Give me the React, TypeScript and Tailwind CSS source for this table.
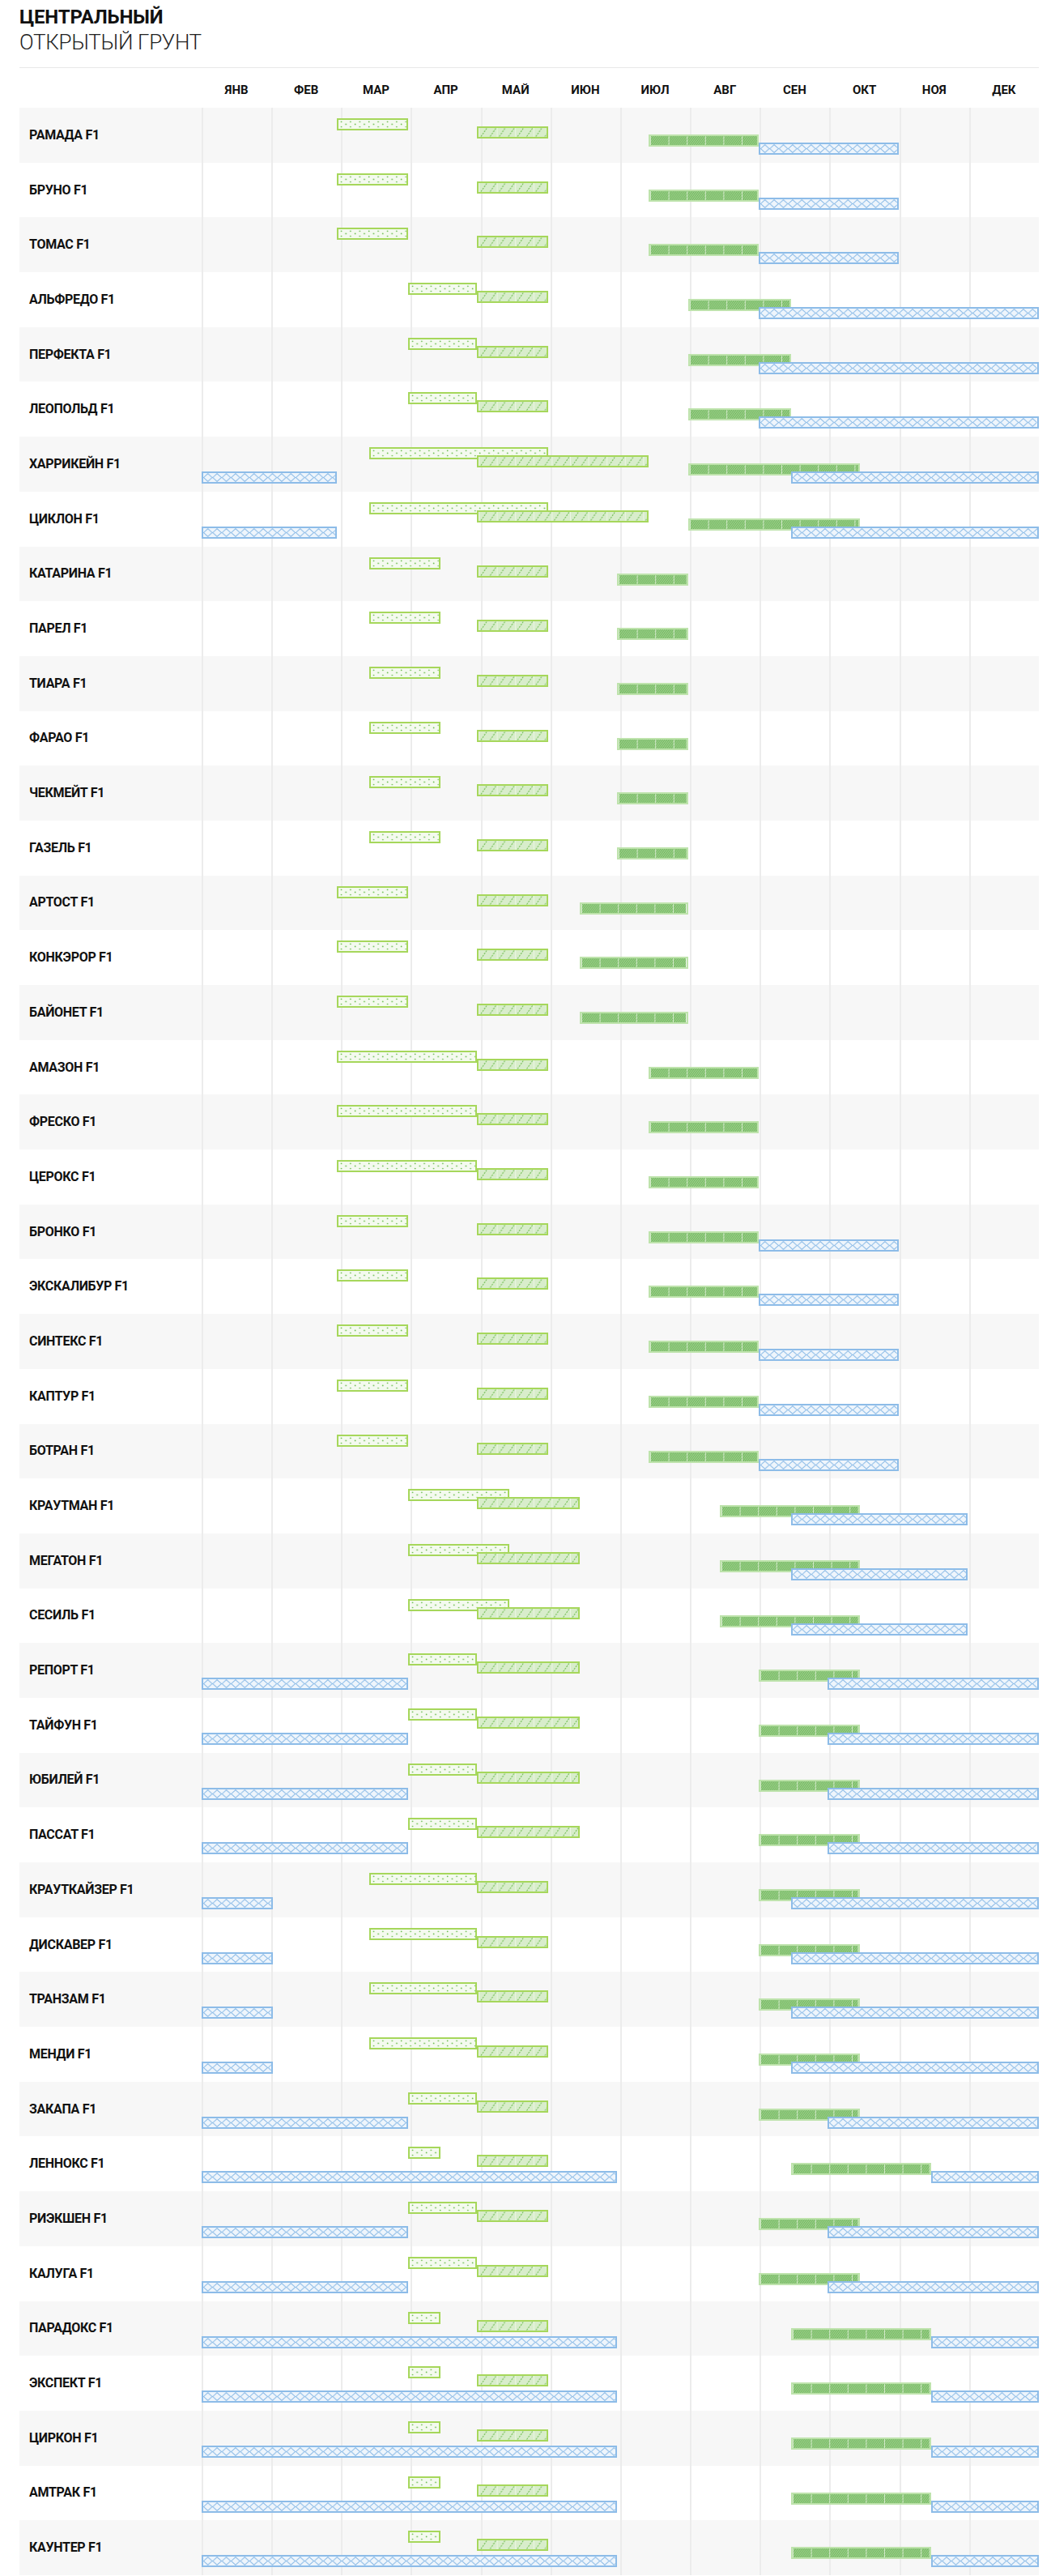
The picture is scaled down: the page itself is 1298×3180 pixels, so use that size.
import React from 'react';

type BarType = 'dot' | 'hat' | 'dark' | 'blue';
type Span = [BarType, number, number];

const MONTHS = ['ЯНВ', 'ФЕВ', 'МАР', 'АПР', 'МАЙ', 'ИЮН', 'ИЮЛ', 'АВГ', 'СЕН', 'ОКТ', 'НОЯ', 'ДЕК'];
const MONTH_START = [0, 31, 59, 90, 120, 151, 181, 212, 243, 273, 304, 334, 365];

// 3 = 1 марта, 3.5 = 15 марта, 13 = конец года
const toDay = (x: number) => {
  const m = Math.floor(x);
  return MONTH_START[m - 1] + (x - m > 0 ? 14 : 0);
};

const A: Span[] = [['dot', 3, 4], ['hat', 5, 6], ['dark', 7.5, 9], ['blue', 9, 11]];
const B: Span[] = [['dot', 4, 5], ['hat', 5, 6], ['dark', 8, 9.5], ['blue', 9, 13]];
const C: Span[] = [['dot', 3.5, 6], ['hat', 5, 7.5], ['dark', 8, 10.5], ['blue', 9.5, 13], ['blue', 1, 3]];
const D: Span[] = [['dot', 3.5, 4.5], ['hat', 5, 6], ['dark', 7, 8]];
const E: Span[] = [['dot', 3, 4], ['hat', 5, 6], ['dark', 6.5, 8]];
const F: Span[] = [['dot', 3, 5], ['hat', 5, 6], ['dark', 7.5, 9]];
const H: Span[] = [['dot', 4, 5.5], ['hat', 5, 6.5], ['dark', 8.5, 10.5], ['blue', 9.5, 12]];
const I: Span[] = [['dot', 4, 5], ['hat', 5, 6.5], ['dark', 9, 10.5], ['blue', 10, 13], ['blue', 1, 4]];
const J: Span[] = [['dot', 3.5, 5], ['hat', 5, 6], ['dark', 9, 10.5], ['blue', 9.5, 13], ['blue', 1, 2]];
const K: Span[] = [['dot', 4, 5], ['hat', 5, 6], ['dark', 9, 10.5], ['blue', 10, 13], ['blue', 1, 4]];
const L: Span[] = [['dot', 4, 4.5], ['hat', 5, 6], ['dark', 9.5, 11.5], ['blue', 11.5, 13], ['blue', 1, 7]];

const rows: { name: string; bars: Span[] }[] = [
  { name: 'РАМАДА F1', bars: A },
  { name: 'БРУНО F1', bars: A },
  { name: 'ТОМАС F1', bars: A },
  { name: 'АЛЬФРЕДО F1', bars: B },
  { name: 'ПЕРФЕКТА F1', bars: B },
  { name: 'ЛЕОПОЛЬД F1', bars: B },
  { name: 'ХАРРИКЕЙН F1', bars: C },
  { name: 'ЦИКЛОН F1', bars: C },
  { name: 'КАТАРИНА F1', bars: D },
  { name: 'ПАРЕЛ F1', bars: D },
  { name: 'ТИАРА F1', bars: D },
  { name: 'ФАРАО F1', bars: D },
  { name: 'ЧЕКМЕЙТ F1', bars: D },
  { name: 'ГАЗЕЛЬ F1', bars: D },
  { name: 'АРТОСТ F1', bars: E },
  { name: 'КОНКЭРОР F1', bars: E },
  { name: 'БАЙОНЕТ F1', bars: E },
  { name: 'АМАЗОН F1', bars: F },
  { name: 'ФРЕСКО F1', bars: F },
  { name: 'ЦЕРОКС F1', bars: F },
  { name: 'БРОНКО F1', bars: A },
  { name: 'ЭКСКАЛИБУР F1', bars: A },
  { name: 'СИНТЕКС F1', bars: A },
  { name: 'КАПТУР F1', bars: A },
  { name: 'БОТРАН F1', bars: A },
  { name: 'КРАУТМАН F1', bars: H },
  { name: 'МЕГАТОН F1', bars: H },
  { name: 'СЕСИЛЬ F1', bars: H },
  { name: 'РЕПОРТ F1', bars: I },
  { name: 'ТАЙФУН F1', bars: I },
  { name: 'ЮБИЛЕЙ F1', bars: I },
  { name: 'ПАССАТ F1', bars: I },
  { name: 'КРАУТКАЙЗЕР F1', bars: J },
  { name: 'ДИСКАВЕР F1', bars: J },
  { name: 'ТРАНЗАМ F1', bars: J },
  { name: 'МЕНДИ F1', bars: J },
  { name: 'ЗАКАПА F1', bars: K },
  { name: 'ЛЕННОКС F1', bars: L },
  { name: 'РИЭКШЕН F1', bars: K },
  { name: 'КАЛУГА F1', bars: K },
  { name: 'ПАРАДОКС F1', bars: L },
  { name: 'ЭКСПЕКТ F1', bars: L },
  { name: 'ЦИРКОН F1', bars: L },
  { name: 'АМТРАК F1', bars: L },
  { name: 'КАУНТЕР F1', bars: L },
];

const barClass: Record<BarType, string> = {
  dot: 'top-[13px] border-[#a6d75b]',
  hat: 'top-[23px] border-[#a6d75b]',
  dark: 'top-[33px] border-[#bee3ac]',
  blue: 'top-[43px] border-[#8dbce8]',
};

const Patterns = () => {
  const darkLines = [];
  for (let x = -9; x < 24; x += 2.6) darkLines.push(x);
  return (
    <svg width="0" height="0" className="block">
      <defs>
        <pattern id="p-dot" width="11.4" height="11" patternUnits="userSpaceOnUse">
          <rect width="11.4" height="11" fill="#f4faef" />
          <circle cx="3.5" cy="2.3" r="0.85" fill="#69bd4c" />
          <circle cx="9.2" cy="5.4" r="0.85" fill="#69bd4c" />
          <circle cx="3.5" cy="8.5" r="0.85" fill="#69bd4c" />
        </pattern>
        <pattern id="p-hat" width="22.6" height="11" patternUnits="userSpaceOnUse">
          <rect width="22.6" height="11" fill="#d8edcb" />
          <rect width="0.8" height="11" fill="#f1f9ec" />
          <line x1="3" y1="10.5" x2="10" y2="0.5" stroke="#6dbd4f" strokeWidth="1" strokeDasharray="2.2 1.2" />
          <line x1="14.3" y1="10.5" x2="21.3" y2="0.5" stroke="#6dbd4f" strokeWidth="1" strokeDasharray="2.2 1.2" />
        </pattern>
        <pattern id="p-dark" width="22.6" height="11" patternUnits="userSpaceOnUse">
          <rect width="22.6" height="11" fill="#9ad187" />
          {darkLines.map((x) => (
            <line key={x} x1={x} y1="11" x2={x + 8} y2="0" stroke="#64a853" strokeWidth="0.8" />
          ))}
          <rect width="0.8" height="11" fill="#e3f2dc" />
        </pattern>
        <pattern id="p-blue" width="11.4" height="11" patternUnits="userSpaceOnUse">
          <rect width="11.4" height="11" fill="#eef5fc" />
          <polygon points="0.5,5.5 5.7,0.6 10.9,5.5 5.7,10.4" fill="none" stroke="#86b8e6" strokeWidth="1" />
        </pattern>
      </defs>
    </svg>
  );
};

const Bar = ({ type, from, to }: { type: BarType; from: number; to: number }) => {
  const start = toDay(from);
  const end = toDay(to);
  return (
    <div
      className={`absolute h-[15px] border-2 ${barClass[type]}`}
      style={{ left: `${(start / 365) * 100}%`, width: `${((end - start) / 365) * 100}%` }}
    >
      <svg className="block h-full w-full">
        <rect width="100%" height="100%" fill={`url(#p-${type})`} />
      </svg>
    </div>
  );
};

export default function App() {
  return (
    <div className="bg-white pl-6 pr-[15px] font-['Roboto','Liberation_Sans',sans-serif] text-[#111]">
      <Patterns />
      <div className="border-b border-[#e8e8e8] pt-[7px] pb-[16px]">
        <h1 className="text-[24px] font-bold leading-[28px] tracking-[-0.2px]">ЦЕНТРАЛЬНЫЙ</h1>
        <h2 className="mt-[2px] text-[26px] font-light leading-[30px] tracking-[-0.3px] text-[#222]">ОТКРЫТЫЙ ГРУНТ</h2>
      </div>

      <div className="flex h-[49px] pt-[17px]">
        <div className="w-[225px] shrink-0" />
        <div className="grid flex-1 grid-cols-12">
          {MONTHS.map((m) => (
            <div key={m} className="text-center text-[15px] font-bold leading-[20px]">
              {m}
            </div>
          ))}
        </div>
      </div>

      <div>
        {rows.map((row, i) => (
          <div key={row.name} className={`flex h-[67.7px] ${i % 2 === 0 ? 'bg-[#f7f7f7]' : 'bg-white'}`}>
            <div className="flex w-[225px] shrink-0 items-center pl-[12px] text-[16px] font-bold tracking-[-0.3px]">
              {row.name}
            </div>
            <div className="relative flex-1">
              <div className="grid h-full grid-cols-12">
                {MONTHS.map((m) => (
                  <div key={m} className="border-l-2 border-[#ececec]" />
                ))}
              </div>
              {row.bars.map(([type, from, to], j) => (
                <Bar key={j} type={type} from={from} to={to} />
              ))}
            </div>
          </div>
        ))}
      </div>
    </div>
  );
}
